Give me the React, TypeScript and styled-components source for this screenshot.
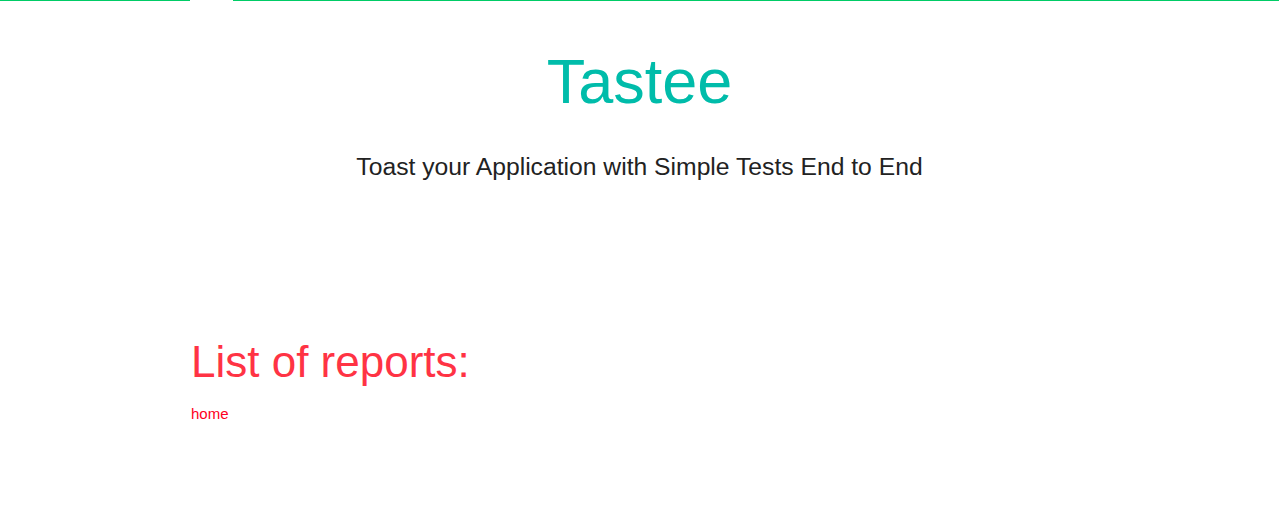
import React from "react";
import styled, { createGlobalStyle } from "styled-components";

const GlobalStyle = createGlobalStyle`
  html, body {
    margin: 0;
    padding: 0;
    background: #ffffff;
    font-family: "Liberation Sans", Arial, Helvetica, sans-serif;
  }
`;

const Page = styled.div`
  width: 100%;
  min-height: 514px;
`;

const TopBar = styled.div`
  display: flex;
  height: 1px;
`;

const Line = styled.div<{ $width?: number }>`
  background: #00cc66;
  height: 1px;
  ${({ $width }) => ($width ? `width: ${$width}px;` : "flex: 1;")}
`;

const Notch = styled.div`
  width: 43px;
`;

const Header = styled.header`
  display: flex;
  flex-direction: column;
  align-items: center;
  padding-top: 49px;
`;

const Title = styled.h1`
  margin: 0;
  font-size: 63px;
  line-height: 63px;
  font-weight: 400;
  color: #00bcaa;
`;

const Subtitle = styled.p`
  margin: 41px 0 0;
  font-size: 24.7px;
  line-height: 25px;
  color: #222222;
`;

const Reports = styled.section`
  padding: 161px 191px 0;
`;

const ReportsTitle = styled.h2`
  margin: 0;
  font-size: 44px;
  line-height: 44px;
  font-weight: 400;
  color: #ff3344;
`;

const ReportList = styled.ul`
  list-style: none;
  margin: 21px 0 0;
  padding: 0;
`;

const ReportLink = styled.a`
  font-size: 15px;
  line-height: 15px;
  color: #ff0022;
  text-decoration: none;
  display: inline-block;
`;

const reports = ["home"];

const App: React.FC = () => (
  <Page>
    <GlobalStyle />
    <TopBar>
      <Line $width={190} />
      <Notch />
      <Line />
    </TopBar>
    <Header>
      <Title>Tastee</Title>
      <Subtitle>Toast your Application with Simple Tests End to End</Subtitle>
    </Header>
    <Reports>
      <ReportsTitle>List of reports:</ReportsTitle>
      <ReportList>
        {reports.map(r => (
          <li key={r}>
            <ReportLink href={`#${r}`}>{r}</ReportLink>
          </li>
        ))}
      </ReportList>
    </Reports>
  </Page>
);

export default App;
